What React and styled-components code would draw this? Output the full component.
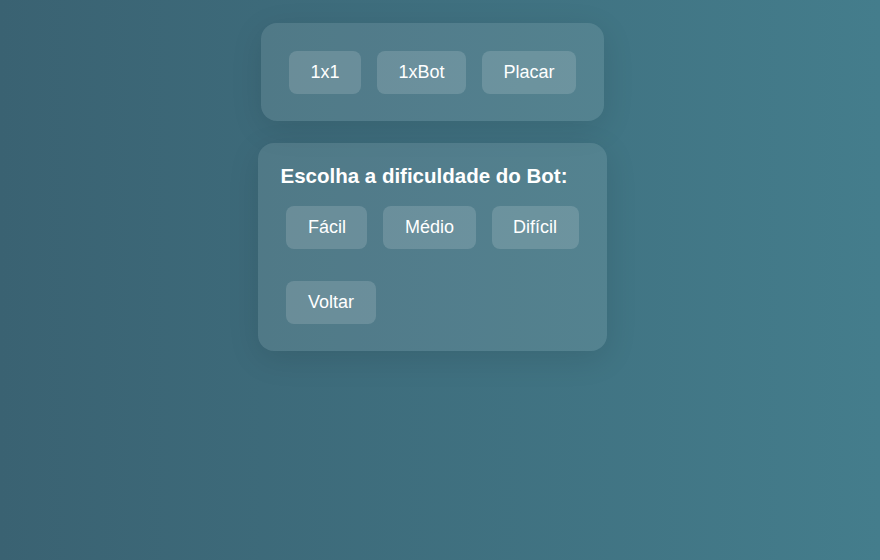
import React from "react";
import styled, { createGlobalStyle } from "styled-components";

const Global = createGlobalStyle`
  html, body { margin: 0; padding: 0; }
  body {
    min-height: 100vh;
    background: linear-gradient(to right, #3a6272, #447d8c);
    font-family: "Liberation Sans", Arial, sans-serif;
    color: #fff;
  }
`;

const Page = styled.div`
  display: flex;
  flex-direction: column;
  align-items: center;
  gap: 22px;
  padding: 23px 15px 0 0;
`;

const Panel = styled.div`
  background: rgba(255, 255, 255, 0.1);
  border-radius: 16px;
  padding: 20px 20px 19px;
  box-shadow: 0 8px 32px rgba(0, 0, 0, 0.1);
  display: flex;
  flex-direction: column;
  align-items: flex-start;
`;

const Row = styled.div`
  display: flex;
  margin-top: ${(p) => p.$mt || 0}px;
`;

const Button = styled.button`
  margin: 8px;
  height: 43px;
  padding: 0 21.5px;
  border: none;
  border-radius: 8px;
  background: rgba(255, 255, 255, 0.15);
  color: #fff;
  font-family: "Liberation Sans", Arial, sans-serif;
  font-size: 18px;
  cursor: pointer;
`;

const Title = styled.h3`
  margin: 0 0 11px 0;
  padding: 1px 0 0 2px;
  font-size: 20.5px;
  line-height: 23px;
  font-weight: bold;
  color: #fff;
`;

export default function App() {
  return (
    <>
      <Global />
      <Page>
        <Panel>
          <Row>
            <Button>1x1</Button>
            <Button>1xBot</Button>
            <Button>Placar</Button>
          </Row>
        </Panel>
        <Panel>
          <Title>Escolha a dificuldade do Bot:</Title>
          <Row>
            <Button>Fácil</Button>
            <Button>Médio</Button>
            <Button>Difícil</Button>
          </Row>
          <Row $mt={16}>
            <Button>Voltar</Button>
          </Row>
        </Panel>
      </Page>
    </>
  );
}
